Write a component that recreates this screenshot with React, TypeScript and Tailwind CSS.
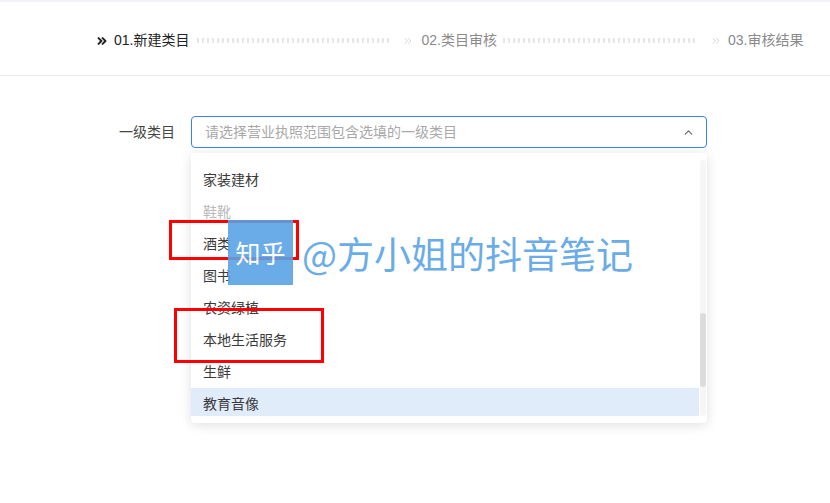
import React from "react";
import { ChevronsRight, ChevronUp } from "lucide-react";

const items = [
  { name: "家装建材" },
  { name: "鞋靴", disabled: true },
  { name: "酒类" },
  { name: "图书" },
  { name: "农资绿植" },
  { name: "本地生活服务" },
  { name: "生鲜" },
  { name: "教育音像", active: true },
];

function Dots({ w }: { w: string }) {
  return (
    <div
      className={`${w} h-[5px] bg-[repeating-linear-gradient(90deg,#e6e6e6_0_2px,transparent_2px_5px)]`}
    />
  );
}

export default function App() {
  return (
    <div className="relative w-[830px] h-[503px] overflow-hidden bg-white text-[14px] text-[#333] font-['Liberation_Sans','Noto_Sans_CJK_SC',sans-serif]">
      <div className="h-[2px] bg-[#f3f2f8]" />
      {/* steps */}
      <div className="h-[74px] border-b border-[#ececec] flex items-center pl-[95px] pt-[4px]">
        <ChevronsRight className="w-[14px] h-[14px] text-[#222]" strokeWidth={3.4} />
        <span className="ml-[5px] text-[#222]">01.新建类目</span>
        <div className="ml-[8px]">
          <Dots w="w-[194px]" />
        </div>
        <ChevronsRight className="ml-[11px] w-[12px] h-[12px] text-[#d6d6d6]" strokeWidth={2} />
        <span className="ml-[7px] text-[#8a8a8a]">02.类目审核</span>
        <div className="ml-[6px]">
          <Dots w="w-[194px]" />
        </div>
        <ChevronsRight className="ml-[13px] w-[12px] h-[12px] text-[#d6d6d6]" strokeWidth={2} />
        <span className="ml-[6px] text-[#8a8a8a]">03.审核结果</span>
      </div>

      {/* form */}
      <div className="pt-[40px]">
        <div className="flex items-center">
          <div className="w-[175px] text-right text-[#444]">一级类目</div>
          <div className="ml-[16px] w-[516px] h-[32px] border border-[#3d7ffb] rounded-[4px] flex items-center justify-between pl-[13px] pr-[11px]">
            <span className="text-[#a8a8a8]">请选择营业执照范围包含选填的一级类目</span>
            <ChevronUp className="w-[13px] h-[13px] text-[#666]" strokeWidth={2} />
          </div>
        </div>

        <div className="ml-[191px] mt-[5px] w-[516px] h-[270px] bg-white rounded-[4px] shadow-[0_2px_12px_rgba(0,0,0,0.13)] flex py-[7px]">
          <div className="flex-1 h-[256px] overflow-hidden">
            <div className="mt-[4px]">
              {items.map((it) => (
                <div
                  key={it.name}
                  className={`h-[32px] flex items-center pl-[12px] ${
                    it.disabled ? "text-[#b9b9b9]" : "text-[#3a3a3a]"
                  } ${it.active ? "bg-[#e1ecfa]" : ""}`}
                >
                  {it.name}
                </div>
              ))}
            </div>
          </div>
          <div className="w-[6px] ml-[1px] mr-[1px] h-[256px] bg-[#f6f6f6] rounded-[3px] flex flex-col">
            <div className="h-[153px]" />
            <div className="h-[74px] bg-[#dcdcdc] rounded-[3px]" />
          </div>
        </div>
      </div>

      {/* annotation boxes */}
      <div className="absolute left-[169px] top-[220px] w-[130px] h-[40px] border-[3px] border-[#ff0000]" />
      <div className="absolute left-[174px] top-[308px] w-[150px] h-[55px] border-[3px] border-[#ff0000]" />

      {/* watermark */}
      <div className="absolute left-[228px] top-[220px] flex items-center opacity-[0.9]">
        <div className="w-[65px] h-[65px] bg-[#5aa4e5] flex items-center justify-center text-white text-[25px] font-['Noto_Sans_CJK_SC',sans-serif]">
          知乎
        </div>
        <div className="ml-[9px] mt-[2px] text-[#5aa4e5] text-[37px] leading-none font-['Noto_Sans_CJK_SC',sans-serif]">
          @方小姐的抖音笔记
        </div>
      </div>
    </div>
  );
}
